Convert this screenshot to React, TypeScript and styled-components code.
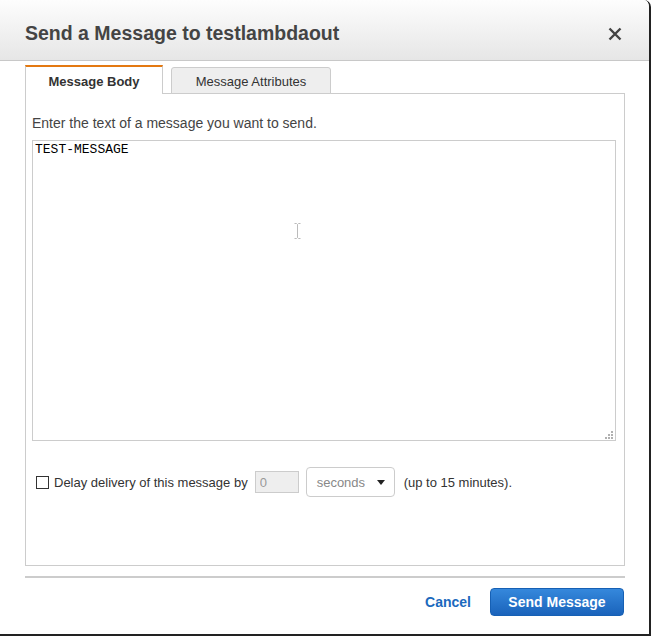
import React from "react";
import styled, { createGlobalStyle } from "styled-components";

const Global = createGlobalStyle`
  html, body { margin: 0; padding: 0; background: #fff; }
  body { font-family: "Liberation Sans", Arial, sans-serif; }
  * { box-sizing: border-box; }
`;

const Dialog = styled.div`
  width: 651px;
  height: 636px;
  background: #fff;
  border-right: 2px solid #222;
  border-bottom: 2px solid #222;
  border-top-right-radius: 7px;
  display: flex;
  flex-direction: column;
  overflow: hidden;
`;

const Header = styled.div`
  height: 61px;
  flex: none;
  background: linear-gradient(#fdfdfd, #e6e6e6);
  border-bottom: 1px solid #c8c8c8;
  display: flex;
  align-items: flex-start;
  justify-content: space-between;
  padding: 23px 27px 0 25px;
`;

const Title = styled.h1`
  margin: 0;
  font-size: 19.5px;
  line-height: 20px;
  font-weight: bold;
  color: #444;
`;

const Close = styled.button`
  border: 0;
  background: none;
  padding: 0;
  margin-top: 4px;
  width: 14px;
  height: 14px;
  display: flex;
  cursor: pointer;
`;

const Body = styled.div`
  padding: 4px 24px 0 25px;
  display: flex;
  flex-direction: column;
`;

const TabRow = styled.div`
  display: flex;
  align-items: flex-end;
  gap: 8px;
  height: 29px;
  margin-bottom: -1px;
  position: relative;
  z-index: 1;
`;

const Tab = styled.div<{ $active?: boolean }>`
  height: ${(p) => (p.$active ? "29px" : "27px")};
  width: ${(p) => (p.$active ? "138px" : "160px")};
  display: flex;
  align-items: center;
  justify-content: center;
  font-size: 13px;
  color: #333;
  font-weight: ${(p) => (p.$active ? "bold" : "normal")};
  background: ${(p) => (p.$active ? "#fff" : "#eee")};
  border: 1px solid #ccc;
  border-bottom: ${(p) => (p.$active ? "0" : "1px solid #ccc")};
  border-top: ${(p) => (p.$active ? "2px solid #e47911" : "1px solid #ccc")};
  border-radius: ${(p) => (p.$active ? "0" : "3px 3px 0 0")};
  padding-top: 1px;
`;

const Panel = styled.div`
  height: 473px;
  border: 1px solid #ccc;
  padding: 21px 8px 0 6px;
  display: flex;
  flex-direction: column;
`;

const Instruction = styled.p`
  margin: 0 0 9px;
  font-size: 14px;
  line-height: 16px;
  color: #444;
`;

const AreaWrap = styled.div`
  position: relative;
  width: 584px;
  height: 301px;
`;

const TextArea = styled.textarea`
  width: 100%;
  height: 100%;
  border: 1px solid #ccc;
  padding: 1px 2px;
  margin: 0;
  resize: none;
  outline: none;
  font-family: "Liberation Mono", "Courier New", monospace;
  font-size: 13px;
  line-height: 15px;
  color: #000;
`;

const Grip = styled.svg`
  position: absolute;
  right: 3px;
  bottom: 2px;
`;

const Cursor = styled.svg`
  position: absolute;
  left: 262px;
  top: 83px;
`;

const DelayRow = styled.div`
  margin-top: 26px;
  height: 30px;
  display: flex;
  align-items: center;
  font-size: 13px;
  color: #333;
`;

const Check = styled.span`
  width: 13px;
  height: 13px;
  border: 1px solid #333;
  background: #fff;
  margin: 0 5px 0 4px;
  flex: none;
`;

const NumInput = styled.input`
  width: 44px;
  height: 22px;
  margin: 0 7px 0 7px;
  border: 1px solid #ccc;
  background: #eee;
  padding: 0 4px;
  font-family: "Liberation Sans", Arial, sans-serif;
  font-size: 13px;
  color: #999;
`;

const Select = styled.div`
  width: 89px;
  height: 30px;
  border: 1px solid #ccc;
  border-radius: 4px;
  display: flex;
  align-items: center;
  justify-content: space-between;
  padding: 0 9px 0 10px;
  color: #888;
  font-size: 13px;
  margin-right: 9px;
`;

const Divider = styled.div`
  height: 2px;
  margin: 10px 24px 0 25px;
  background: #ccc;
`;

const Footer = styled.div`
  display: flex;
  justify-content: flex-end;
  align-items: center;
  gap: 19px;
  padding: 10px 25px 0 25px;
`;

const LinkButton = styled.button`
  border: 0;
  background: none;
  padding: 0;
  font-family: "Liberation Sans", Arial, sans-serif;
  font-size: 14px;
  font-weight: bold;
  color: #1b69bd;
  cursor: pointer;
`;

const PrimaryButton = styled.button`
  width: 134px;
  height: 28px;
  border: 1px solid #1660b4;
  border-radius: 4px;
  background: linear-gradient(#3588dc, #1a63bb);
  color: #fff;
  font-family: "Liberation Sans", Arial, sans-serif;
  font-size: 14px;
  font-weight: bold;
  padding: 0;
  cursor: pointer;
`;

export default function App() {
  return (
    <>
      <Global />
      <Dialog>
        <Header>
          <Title>Send a Message to testlambdaout</Title>
          <Close aria-label="Close">
            <svg width="14" height="14" viewBox="0 0 14 14">
              <path d="M1.5 1.5 L12.5 12.5 M12.5 1.5 L1.5 12.5" stroke="#444" strokeWidth="2.4" strokeLinecap="butt" />
            </svg>
          </Close>
        </Header>
        <Body>
          <TabRow>
            <Tab $active>Message Body</Tab>
            <Tab>Message Attributes</Tab>
          </TabRow>
          <Panel>
            <Instruction>Enter the text of a message you want to send.</Instruction>
            <AreaWrap>
              <TextArea defaultValue="TEST-MESSAGE" />
              <Cursor width="7" height="16" viewBox="0 0 7 16">
                <path d="M0.5 0.5 H2.5 L3.5 1.5 L4.5 0.5 H6.5 M3.5 1.5 V14.5 M0.5 15.5 H2.5 L3.5 14.5 L4.5 15.5 H6.5" stroke="#bbb" strokeWidth="1" fill="none" />
              </Cursor>
              <Grip width="8" height="8" viewBox="0 0 8 8">
                <rect x="6" y="0" width="2" height="2" fill="#b0b0b0" />
                <rect x="3" y="3" width="2" height="2" fill="#b0b0b0" />
                <rect x="6" y="3" width="2" height="2" fill="#b0b0b0" />
                <rect x="0" y="6" width="2" height="2" fill="#b0b0b0" />
                <rect x="3" y="6" width="2" height="2" fill="#b0b0b0" />
                <rect x="6" y="6" width="2" height="2" fill="#b0b0b0" />
              </Grip>
            </AreaWrap>
            <DelayRow>
              <Check />
              <span>Delay delivery of this message by</span>
              <NumInput defaultValue="0" disabled />
              <Select>
                <span>seconds</span>
                <svg width="8" height="5" viewBox="0 0 8 5">
                  <path d="M0 0 H8 L4 5 Z" fill="#222" />
                </svg>
              </Select>
              <span>(up to 15 minutes).</span>
            </DelayRow>
          </Panel>
        </Body>
        <Divider />
        <Footer>
          <LinkButton>Cancel</LinkButton>
          <PrimaryButton>Send Message</PrimaryButton>
        </Footer>
      </Dialog>
    </>
  );
}
